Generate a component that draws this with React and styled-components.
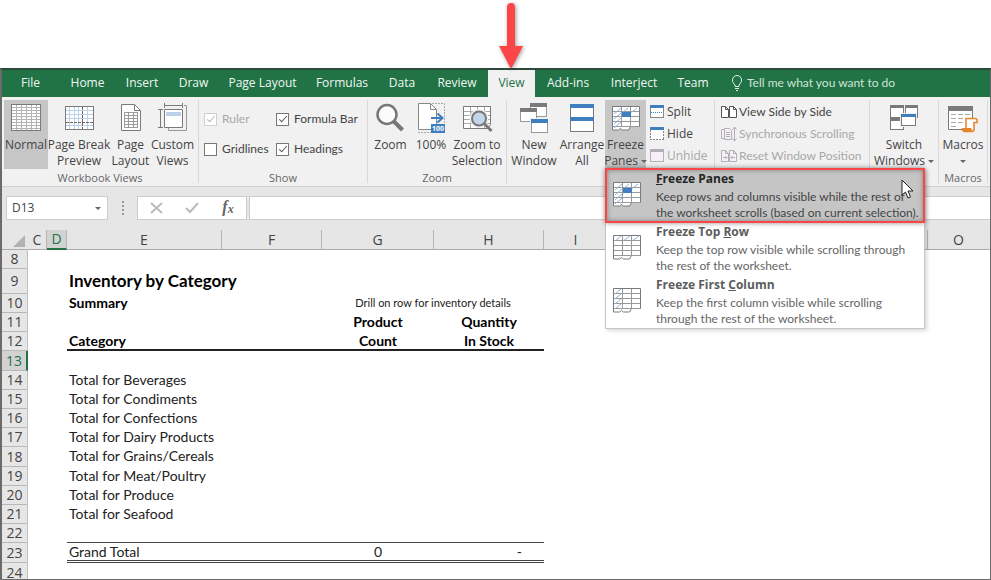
import React from "react";
import styled, { createGlobalStyle, css } from "styled-components";

const GlobalStyle = createGlobalStyle`
  *, *::before, *::after { box-sizing: border-box; }
  body { margin: 0; background: #fff; overflow: hidden; }
  button, input { font: inherit; color: inherit; }
`;

const Page = styled.div`
  display: flex;
  flex-direction: column;
  height: 100vh;
  padding-top: 68px;
  font-family: "Open Sans", "Noto Sans", sans-serif;
  font-size: 12px;
  line-height: 16px;
  color: #444;
`;

const compactText = css`
  font-family: Lato, "Open Sans", sans-serif;
  font-size: 12px;
`;

const AppWindow = styled.main`
  flex: 1;
  min-height: 0;
  display: flex;
  flex-direction: column;
  border: 1px solid #6b6b6b;
  border-left-width: 2px;
  border-top: 2px solid #2b4a3a;
`;

/* Tab strip */
const TabStrip = styled.nav`
  display: flex;
  flex: none;
  height: 27px;
  background: #217346;
`;

const Tab = styled.button`
  position: relative;
  flex: none;
  width: ${(p) => p.$width}px;
  padding: 0 0 2px;
  border: 0;
  background: ${(p) => (p.$active ? "#f1f1f1" : "transparent")};
  color: ${(p) => (p.$active ? "#217346" : "#f0f7f3")};
  white-space: nowrap;
`;

const TellMe = styled.button`
  ${compactText}
  display: flex;
  align-items: center;
  gap: 4px;
  padding: 0 12px 2px;
  border: 0;
  background: transparent;
  color: #cfe3d7;
  white-space: nowrap;
`;

const Pointer = styled.svg`
  position: absolute;
  left: 50%;
  bottom: 100%;
  width: 36px;
  height: 70px;
  transform: translateX(-50%);
  filter: drop-shadow(1px 1px 2px rgba(0, 0, 0, 0.4));
`;

/* Ribbon */
const Ribbon = styled.section`
  display: flex;
  flex: none;
  height: 90px;
  padding-top: 3px;
  background: #f1f1f1;
  border-bottom: 1px solid #d0d0d0;
`;

const Group = styled.div`
  display: flex;
  flex-direction: column;
  flex: none;
  width: ${(p) => p.$width}px;
  height: 83px;
  border-right: 1px solid #d8d8d8;
`;

const GroupBody = styled.div`
  display: flex;
  flex: none;
  height: 69px;
  padding-left: ${(p) => p.$inset || 2}px;
`;

const GroupLabel = styled.div`
  flex: none;
  height: 16px;
  margin-top: 1px;
  font-size: 11px;
  line-height: 16px;
  text-align: center;
  color: #666;
`;

const BigButtonBox = styled.div`
  position: relative;
  flex: none;
  width: ${(p) => p.$width}px;
`;

const BigButton = styled.button`
  display: flex;
  flex-direction: column;
  align-items: center;
  width: 100%;
  height: 69px;
  padding: 3px 0 0;
  border: 0;
  background: ${(p) => (p.$pressed ? "#c6c6c6" : "transparent")};
  color: #444;
  > svg { flex: none; width: 32px; height: 32px; margin-bottom: 2px; }
`;

const ButtonLine = styled.span`
  display: flex;
  align-items: center;
  gap: 3px;
  height: 16px;
  white-space: nowrap;
`;

const Caret = styled.span`
  width: 0;
  height: 0;
  border: 3px solid transparent;
  border-top-color: #666;
  border-bottom-width: 0;
`;

const CheckGrid = styled.div`
  display: grid;
  grid-template-columns: 72px auto;
  align-content: start;
  row-gap: 14px;
  padding-top: 11px;
`;

const CheckLabel = styled.label`
  ${compactText}
  display: flex;
  align-items: center;
  gap: 5px;
  height: 16px;
  white-space: nowrap;
  color: ${(p) => (p.$disabled ? "#a8a8a8" : "#444")};
`;

const CheckBox = styled.input.attrs({ type: "checkbox" })`
  appearance: none;
  flex: none;
  display: grid;
  place-items: center;
  width: 13px;
  height: 13px;
  margin: 0;
  border: 1px solid #777;
  background: #fff;
  &:disabled { border-color: #cfcfcf; }
  &:checked::after {
    content: "";
    width: 4px;
    height: 8px;
    margin-bottom: 2px;
    border: solid #555;
    border-width: 0 1px 1px 0;
    transform: rotate(42deg);
  }
  &:checked:disabled::after { border-color: #b5b5b5; }
`;

const SmallColumn = styled.div`
  display: flex;
  flex-direction: column;
  flex: none;
  gap: 6px;
  width: ${(p) => p.$width}px;
  height: 83px;
  padding: 4px 0 0 ${(p) => p.$inset}px;
  border-right: 1px solid #d8d8d8;
  ${(p) => p.$compact && compactText}
`;

const SmallButton = styled.button`
  display: flex;
  align-items: center;
  gap: 2px;
  height: 16px;
  padding: 0;
  border: 0;
  background: transparent;
  color: ${(p) => (p.disabled ? "#a8a8a8" : "#444")};
  white-space: nowrap;
  svg { flex: none; height: 16px; width: ${(p) => p.$icon}px; }
`;

/* Freeze menu */
const Menu = styled.div`
  position: absolute;
  z-index: 5;
  top: 68px;
  left: 0;
  width: 320px;
  background: #fff;
  border: 1px solid #c6c6c6;
  box-shadow: 2px 2px 4px rgba(0, 0, 0, 0.15);
`;

const MenuItem = styled.button`
  position: relative;
  display: grid;
  grid-template-columns: 50px 1fr;
  width: 100%;
  height: 53px;
  padding: 1px 0 0;
  border: 0;
  text-align: left;
  background: #fff;
  color: #666;
  > svg { margin: 12px 0 0 7px; }
  ${(p) => p.$active && css`
    z-index: 1;
    background: #c5c5c5;
    color: #444;
    &::before {
      content: "";
      position: absolute;
      inset: -1px;
      border: 2px solid #fb4546;
      box-shadow: 0 0 5px rgba(0, 0, 0, 0.45), inset 0 0 5px rgba(0, 0, 0, 0.35);
    }
  `}
`;

const MenuTitle = styled.strong`
  display: block;
  height: 19px;
  line-height: 18px;
  font-weight: 700;
  color: ${(p) => (p.$active ? "#262626" : "#5c5c5c")};
`;

const MenuText = styled.span`
  ${compactText}
  display: block;
  white-space: pre;
`;

const Cursor = styled.svg`
  position: absolute;
  right: 10px;
  top: 10px;
  && { margin: 0; }
`;

/* Formula bar */
const FormulaBar = styled.section`
  display: flex;
  flex: none;
  height: 43px;
  padding: 9px 0 10px 4px;
  background: #e6e6e6;
`;

const NameBox = styled.div`
  display: flex;
  align-items: center;
  width: 102px;
  border: 1px solid #cdcdcd;
  background: #fff;
  input { flex: 1; min-width: 0; padding: 0 0 0 5px; border: 0; outline: 0; background: none; }
  button { display: grid; place-items: center; width: 18px; height: 20px; padding: 0; border: 0; background: none; }
`;

const Dots = styled.div`
  display: grid;
  align-content: center;
  justify-content: center;
  gap: 2px;
  width: 29px;
  i { width: 2px; height: 2px; background: #999; }
`;

const EntryTools = styled.div`
  display: grid;
  grid-template-columns: repeat(3, 1fr);
  width: 110px;
  margin-right: 2px;
  border: 1px solid #cdcdcd;
  background: #fff;
  button { display: grid; place-items: center; padding: 0; border: 0; background: none; }
`;

const FxLabel = styled.span`
  font: italic 700 16px/20px "Liberation Serif", serif;
  color: #666;
  sub { font-size: 12px; vertical-align: -1px; }
`;

const FormulaInput = styled.input`
  flex: 1;
  min-width: 0;
  border: 1px solid #cdcdcd;
  border-right: 0;
  background: #fff;
  outline: 0;
`;

/* Worksheet */
const SheetArea = styled.div`
  flex: 1;
  min-height: 0;
  overflow: hidden;
`;

const Sheet = styled.table`
  width: 100%;
  table-layout: fixed;
  border-collapse: separate;
  border-spacing: 0;
  font-family: Lato, sans-serif;
  font-size: 14px;
  line-height: 16px;
  color: #222;
`;

const Col = styled.col`
  width: ${(p) => (p.$width ? `${p.$width}px` : "auto")};
`;

const ColHead = styled.th`
  height: 20px;
  padding: 0;
  font: 400 14px/18px "Open Sans", sans-serif;
  color: ${(p) => (p.$selected ? "#217346" : "#444")};
  background: ${(p) => (p.$selected ? "#d2d2d2" : "#e6e6e6")};
  border-right: 1px solid ${(p) => (p.$plain ? "#e6e6e6" : "#b4b4b4")};
  border-bottom: ${(p) => (p.$selected ? "2px solid #217346" : "1px solid #ababab")};
`;

const CornerMark = styled.svg`
  display: block;
  margin: 3px 2px 0 auto;
`;

const Row = styled.tr`
  height: ${(p) => p.$height}px;
`;

const RowHead = styled.th`
  padding: 0;
  font: 400 14px/16px "Open Sans", sans-serif;
  color: ${(p) => (p.$selected ? "#217346" : "#444")};
  background: ${(p) => (p.$selected ? "#d2d2d2" : "#e6e6e6")};
  border-right: ${(p) => (p.$selected ? "2px solid #217346" : "1px solid #c0c0c0")};
  border-bottom: 1px solid #b8b8b8;
`;

const Cell = styled.td`
  padding: 0 ${(p) => (p.$align === "right" ? 22 : 0)}px ${(p) => (p.$line ? 0 : 2)}px ${(p) => (p.$align ? 0 : 2)}px;
  white-space: nowrap;
  text-align: ${(p) => p.$align || "left"};
  font-weight: ${(p) => (p.$bold ? 700 : 400)};
  font-size: ${(p) => p.$size || 14}px;
  color: ${(p) => (p.$bold ? "#000" : "#222")};
  ${(p) => p.$line === "thick" && "border-bottom: 2px solid #222;"}
  ${(p) => p.$line === "thin" && "border-bottom: 1px solid #444;"}
  ${(p) => p.$line === "double" && "border-bottom: 3px double #444;"}
`;

const G = "#7a7a7a";
const B = "#3f7fbf";

const NormalIcon = () => (
  <svg viewBox="0 0 32 32" fill="none" shapeRendering="crispEdges">
    <path d="M1.5 1.5h29v26h-29z" fill="#fff" stroke={G} />
    <path d="M6.5 2v25M11.5 2v25M16.5 2v25M21.5 2v25M26.5 2v25M2 4.5h28M2 7.5h28M2 10.5h28M2 13.5h28M2 16.5h28M2 19.5h28M2 22.5h28M2 25.5h28" stroke="#b3b3b3" />
  </svg>
);
const BreakIcon = () => (
  <svg viewBox="0 0 32 32" fill="none" shapeRendering="crispEdges">
    <path d="M2.5 3.5h28v23h-28z" fill="#fff" stroke={G} />
    <path d="M6.5 4v22M11.5 4v22M15.5 4v22M24.5 4v22M3 7.5h27M3 11.5h27M3 15.5h27M3 22.5h27" stroke="#b9d2ea" />
    <path d="M19.5 4v22M3 19.5h27" stroke="#666" strokeDasharray="3 1" />
  </svg>
);
const PageIcon = () => (
  <svg viewBox="0 0 32 32" fill="none" stroke={G}>
    <path d="M6.5 1.5h13l6 6v20h-19z" fill="#fff" />
    <path d="M19.5 1.5v6h6" />
    <path d="M9.5 9.5h13v15h-13zM13.5 9.5v15M18.5 9.5v15M9.5 12.5h13M9.5 15.5h13M9.5 18.5h13M9.5 21.5h13" stroke="#999" />
  </svg>
);
const CustomIcon = () => (
  <svg viewBox="0 0 32 32" fill="none" stroke={G}>
    <path d="M7.5 6.5h18v18h-18z" fill="#fff" />
    <path d="M9 9h15v4H9z" fill="#bcd0e8" stroke="none" />
    <path d="M7 2.5h19M7.5 0v5M25.5 0v5M3.5 7v18M1 6.5h5M1 24.5h5" />
    <path d="M27 2.5h2.5v25h-18V25" stroke="#999" />
  </svg>
);
const ZoomIcon = () => (
  <svg viewBox="0 0 32 32" fill="none" stroke="#777">
    <circle cx="12" cy="11.5" r="9.5" strokeWidth="2.5" fill="#fbfbfb" />
    <path d="M19 18.5l8.5 8.5" strokeWidth="4" />
  </svg>
);
const HundredIcon = () => (
  <svg viewBox="0 0 32 32" fill="none">
    <path d="M17 .5h12.5V20M3 29.5h13" stroke="#aaa" strokeDasharray="2 1" />
    <path d="M3.5 .5h12l6 6v20h-18z" fill="#fff" stroke="#888" />
    <path d="M15.5 .5v6h6" stroke="#888" />
    <path d="M16 15h11M22.5 10.500l5 4.500-5 4.500" stroke={B} strokeWidth="2" />
    <path d="M16 21h14v9H16z" fill={B} />
    <text x="23" y="28" fontSize="7" fontWeight="700" textAnchor="middle" fill="#fff">100</text>
  </svg>
);
const ZoomSelIcon = () => (
  <svg viewBox="0 0 32 32" fill="none">
    <path d="M2.5 3.5h27v18l-3 4h-24z" fill="#fff" stroke={G} />
    <path d="M9 8h14v12H9z" fill="#bcd0e8" />
    <path d="M9.5 4v21M16.5 4v21M23.5 4v21M3 8.5h26M3 12.5h26M3 16.5h26M3 20.5h26" stroke="#aaa" />
    <circle cx="18" cy="15.5" r="7.5" fill="#c3d6ec" stroke="#f1f1f1" strokeWidth="4" />
    <circle cx="18" cy="15.5" r="7" fill="#c3d6ec" stroke="#777" strokeWidth="2" />
    <path d="M23.5 21l7 7" stroke="#777" strokeWidth="3" />
  </svg>
);
const NewWindowIcon = () => (
  <svg viewBox="0 0 32 32" fill="none" shapeRendering="crispEdges">
    <path d="M12.5 .5h16v13h-16z" fill="#fff" stroke="#999" /><path d="M12 0h17v4H12z" fill={G} />
    <path d="M2.5 5.5h16v13h-16z" fill="#fff" stroke="#999" /><path d="M2 5h17v4H2z" fill={G} />
    <path d="M12 15h18v15H12z" fill="#f1f1f1" />
    <path d="M13.5 16.5h16v13h-16z" fill="#fff" stroke="#999" /><path d="M13 16h17v4H13z" fill={B} />
  </svg>
);
const ArrangeIcon = () => (
  <svg viewBox="0 0 32 32" fill="none" shapeRendering="crispEdges">
    <path d="M4.5 1.5h23v27h-23z" fill="#fff" stroke={G} />
    <path d="M4 1h24v4H4zM4 14h24v4H4z" fill={B} />
  </svg>
);
const gridMarks = {
  panes: "M2 8l7-6M9 8l7-6M17 8l8-6M2 13l7-6M2 18l7-6M2 22l7-6",
  row: "M2 6l6-5M10 6l7-5M19 6l7-5",
  column: "M2 6l6-5M2 11l6-5M2 16l6-5M2 21l6-5",
};
const FreezeGrid = ({ kind }) => (
  <svg width="28" height="25" viewBox="0 0 28 25" fill="none">
    <path d="M.5 .5h27v20h-9l-2 3.500h-6l-2-1.500-2 1.500h-6z" fill="#fff" stroke={G} />
    <path d="M9.5 1v20M18.5 1v20M1 5.5h26M1 10.5h26M1 15.5h26M1 20.5h26" stroke="#999" />
    <path d={gridMarks[kind]} stroke="#8db4db" />
    {kind === "panes" && <path d="M10 6h9v5h-9z" fill={B} />}
  </svg>
);
const FreezeIcon = () => (
  <svg viewBox="0 0 32 32"><g transform="translate(2 3)"><FreezeGrid kind="panes" /></g></svg>
);
const SwitchIcon = () => (
  <svg viewBox="0 0 32 32" fill="none" shapeRendering="crispEdges">
    <path d="M2.5 3.5h13v11h-13zM17.5 3.5h12v11h-12zM2.5 16.5h13v10h-13z" fill="#fff" stroke={G} />
    <path d="M2 2h14v3H2zM17 2h13v3H17zM2 15h14v3H2z" fill={G} />
    <path d="M12 10h17v14H12z" fill="#f1f1f1" />
    <path d="M13.5 11.5h14v11h-14z" fill="#fff" stroke={G} /><path d="M13 11h15v3H13z" fill={B} />
  </svg>
);
const MacrosIcon = () => (
  <svg viewBox="0 0 32 32" fill="none">
    <path d="M1.5 3.5h24v23h-24z" fill="#fff" stroke={G} />
    <path d="M1 3h25v5H1z" fill={G} />
    <path d="M4 11.5h5M11 11.5h5M18 11.5h5M4 15.5h5M11 15.5h5M4 19.5h5M11 19.5h5M4 23.5h5" stroke="#aaa" />
    <path d="M19 15.5h9q2 0 2 2v2h-3v7q0 2-2 2h-8q2-1 2-3z" fill="#fff" stroke="#e8832a" strokeWidth="1.5" />
    <path d="M15 25.5h9q0 3 2 3h-9q-2 0-2-3z" fill="#e8832a" stroke="#e8832a" />
  </svg>
);
const PaneIcon = ({ kind }) => (
  <svg viewBox="0 0 15 16" fill="none" shapeRendering="crispEdges">
    <path d="M.5 2.5h13v11H.5z" fill={kind === "unhide" ? "#f5f0f7" : "#fff"} stroke={kind === "unhide" ? "#b5adb8" : "#888"} strokeDasharray={kind === "hide" ? "2 1" : undefined} />
    <path d="M0 1h14v3H0z" fill={kind === "unhide" ? "#b5adb8" : B} />
    {kind === "split" && <path d="M1 8.5h12" stroke={B} strokeDasharray="1 1" />}
  </svg>
);
const PairIcon = ({ kind }) => {
  const c = kind === "side" ? "#555" : "#b5adb8";
  return (
    <svg viewBox="0 0 16 16" fill="none" stroke={c}>
      {kind === "sync" ? (
        <>
          <path d="M3 3.5H.5v9H3M3.5 2.5h5l2 2v9h-7zM5 6.5h4M5 8.5h4M5 10.5h4" />
          <path d="M13.5 1v14M11.5 3.5l2-2.5 2 2.5M11.5 12.5l2 2.5 2-2.5" />
        </>
      ) : (
        <path d="M.5 2.5h4l3 3v8h-7zM4.5 2.5v3h3M8.5 2.5h4l3 3v8h-7zM12.5 2.5v3h3" fill={kind === "side" ? "#fff" : "#f5f0f7"} />
      )}
      {kind === "reset" && <path d="M2 9.5h4M4.5 8L6 9.5 4.5 11M14 9.5h-4M11.5 8L10 9.5l1.500 1.500" />}
    </svg>
  );
};
const BulbIcon = () => (
  <svg width="12" height="16" viewBox="0 0 12 16" fill="none" stroke="#e3efe8">
    <path d="M4 11.5V10C2.5 8.5 1.5 7 1.5 5a4.5 4.5 0 0 1 9 0c0 2-1 3.500-2.500 5v1.500zM4 13.5h4M5 15.5h2" />
  </svg>
);

const tabs = [
  ["File", 57], ["Home", 57], ["Insert", 52], ["Draw", 51], ["Page Layout", 87], ["Formulas", 72],
  ["Data", 48], ["Review", 62], ["View", 47], ["Add-ins", 66], ["Interject", 66], ["Team", 52],
];

const menuItems = [
  { kind: "panes", title: ["", "F", "reeze Panes"], text: "Keep rows and columns visible while the rest of\nthe worksheet scrolls (based on current selection)." },
  { kind: "row", title: ["Freeze Top ", "R", "ow"], text: "Keep the top row visible while scrolling through\nthe rest of the worksheet." },
  { kind: "column", title: ["Freeze First ", "C", "olumn"], text: "Keep the first column visible while scrolling\nthrough the rest of the worksheet." },
];

const rows = [
  { n: 8, h: 19 },
  { n: 9, h: 25, e: "Inventory by Category", bold: true, size: 17 },
  { n: 10, h: 19, e: "Summary", bold: true, note: "Drill on row for inventory details" },
  { n: 11, h: 19, g: "Product", q: "Quantity", bold: true },
  { n: 12, h: 19, e: "Category", g: "Count", q: "In Stock", bold: true, line: "thick" },
  { n: 13, h: 20, selected: true },
  { n: 14, h: 19, e: "Total for Beverages" },
  { n: 15, h: 19, e: "Total for Condiments" },
  { n: 16, h: 19, e: "Total for Confections" },
  { n: 17, h: 19, e: "Total for Dairy Products" },
  { n: 18, h: 20, e: "Total for Grains/Cereals" },
  { n: 19, h: 19, e: "Total for Meat/Poultry" },
  { n: 20, h: 19, e: "Total for Produce" },
  { n: 21, h: 19, e: "Total for Seafood" },
  { n: 22, h: 19, line: "thin" },
  { n: 23, h: 20, e: "Grand Total", g: "0", q: "-", qAlign: "right", line: "double" },
  { n: 24, h: 20 },
];

const Big = ({ icon, lines, width, pressed, caret, children }) => (
  <BigButtonBox $width={width}>
    <BigButton $pressed={pressed}>
      {icon}
      {lines.map((line, i) => (
        <ButtonLine key={i}>
          {line}
          {caret && i === lines.length - 1 && <Caret />}
        </ButtonLine>
      ))}
    </BigButton>
    {children}
  </BigButtonBox>
);

const Check = ({ label, ...rest }) => (
  <CheckLabel $disabled={rest.disabled}>
    <CheckBox {...rest} />
    {label}
  </CheckLabel>
);

const FreezeMenu = () => (
  <Menu role="menu">
    {menuItems.map(({ kind, title, text }) => {
      const active = kind === "panes";
      return (
        <MenuItem key={kind} role="menuitem" $active={active}>
          <FreezeGrid kind={kind} />
          <span>
            <MenuTitle $active={active}>{title[0]}<u>{title[1]}</u>{title[2]}</MenuTitle>
            <MenuText>{text}</MenuText>
          </span>
          {active && (
            <Cursor width="13" height="20" viewBox="0 0 13 20">
              <path d="M1 1v15l3.500-3 2.500 6 2.500-1-2.500-6h5z" fill="#fff" stroke="#222" />
            </Cursor>
          )}
        </MenuItem>
      );
    })}
  </Menu>
);

export default function App() {
  return (
    <Page>
      <GlobalStyle />
      <AppWindow>
        <TabStrip>
          {tabs.map(([name, width]) => (
            <Tab key={name} $width={width} $active={name === "View"}>
              {name}
              {name === "View" && (
                <Pointer viewBox="0 0 36 70">
                  <path d="M13 7a4 4 0 0 1 8 0v39h8L17 69 5 46h8z" fill="#fb4546" />
                </Pointer>
              )}
            </Tab>
          ))}
          <TellMe><BulbIcon />Tell me what you want to do</TellMe>
        </TabStrip>

        <Ribbon>
          <Group $width={197}>
            <GroupBody>
              <Big width={44} pressed icon={<NormalIcon />} lines={["Normal"]} />
              <Big width={62} icon={<BreakIcon />} lines={["Page Break", "Preview"]} />
              <Big width={41} icon={<PageIcon />} lines={["Page", "Layout"]} />
              <Big width={43} icon={<CustomIcon />} lines={["Custom", "Views"]} />
            </GroupBody>
            <GroupLabel>Workbook Views</GroupLabel>
          </Group>
          <Group $width={169}>
            <GroupBody $inset={5}>
              <CheckGrid>
                <Check label="Ruler" defaultChecked disabled />
                <Check label="Formula Bar" defaultChecked />
                <Check label="Gridlines" />
                <Check label="Headings" defaultChecked />
              </CheckGrid>
            </GroupBody>
            <GroupLabel>Show</GroupLabel>
          </Group>
          <Group $width={139}>
            <GroupBody>
              <Big width={41} icon={<ZoomIcon />} lines={["Zoom"]} />
              <Big width={40} icon={<HundredIcon />} lines={["100%"]} />
              <Big width={52} icon={<ZoomSelIcon />} lines={["Zoom to", "Selection"]} />
            </GroupBody>
            <GroupLabel>Zoom</GroupLabel>
          </Group>
          <Group $width={432}>
            <GroupBody>
              <Big width={50} icon={<NewWindowIcon />} lines={["New", "Window"]} />
              <Big width={46} icon={<ArrangeIcon />} lines={["Arrange", "All"]} />
              <Big width={41} pressed caret icon={<FreezeIcon />} lines={["Freeze", "Panes"]}>
                <FreezeMenu />
              </Big>
              <SmallColumn $width={69} $inset={4}>
                <SmallButton $icon={15}><PaneIcon kind="split" />Split</SmallButton>
                <SmallButton $icon={15}><PaneIcon kind="hide" />Hide</SmallButton>
                <SmallButton $icon={15} disabled><PaneIcon kind="unhide" />Unhide</SmallButton>
              </SmallColumn>
              <SmallColumn $width={155} $inset={6} $compact>
                <SmallButton $icon={16}><PairIcon kind="side" />View Side by Side</SmallButton>
                <SmallButton $icon={16} disabled><PairIcon kind="sync" />Synchronous Scrolling</SmallButton>
                <SmallButton $icon={16} disabled><PairIcon kind="reset" />Reset Window Position</SmallButton>
              </SmallColumn>
              <Big width={68} caret icon={<SwitchIcon />} lines={["Switch", "Windows"]} />
            </GroupBody>
          </Group>
          <Group $width={49}>
            <GroupBody>
              <Big width={44} caret icon={<MacrosIcon />} lines={["Macros", ""]} />
            </GroupBody>
            <GroupLabel>Macros</GroupLabel>
          </Group>
        </Ribbon>

        <FormulaBar>
          <NameBox>
            <input aria-label="Name box" defaultValue="D13" />
            <button aria-label="Cell names"><Caret /></button>
          </NameBox>
          <Dots><i /><i /><i /><i /></Dots>
          <EntryTools>
            <button aria-label="Cancel">
              <svg width="13" height="12" viewBox="0 0 13 12" stroke="#bbb" strokeWidth="2"><path d="M1 1l11 10M12 1L1 11" /></svg>
            </button>
            <button aria-label="Enter">
              <svg width="14" height="12" viewBox="0 0 14 12" fill="none" stroke="#bbb" strokeWidth="2"><path d="M1 6l4 4 8-9" /></svg>
            </button>
            <button aria-label="Insert function"><FxLabel>f<sub>x</sub></FxLabel></button>
          </EntryTools>
          <FormulaInput aria-label="Formula" />
        </FormulaBar>

        <SheetArea>
          <Sheet>
            <colgroup>
              {[26, 19, 20, 155, 100, 112, 110, 64, 0, 62].map((w, i) => <Col key={i} $width={w} />)}
            </colgroup>
            <thead>
              <tr>
                <ColHead $plain>
                  <CornerMark width="12" height="12" viewBox="0 0 12 12"><path d="M12 0v12H0z" fill="#b2b2b2" /></CornerMark>
                </ColHead>
                <ColHead>C</ColHead>
                <ColHead $selected>D</ColHead>
                <ColHead>E</ColHead>
                <ColHead>F</ColHead>
                <ColHead>G</ColHead>
                <ColHead>H</ColHead>
                <ColHead>I</ColHead>
                <ColHead />
                <ColHead $plain>O</ColHead>
              </tr>
            </thead>
            <tbody>
              {rows.map((r) => (
                <Row key={r.n} $height={r.h}>
                  <RowHead $selected={r.selected}>{r.n}</RowHead>
                  <Cell />
                  <Cell />
                  <Cell $bold={r.bold} $size={r.size} $line={r.line}>{r.e}</Cell>
                  <Cell $line={r.line} />
                  {r.note ? (
                    <Cell colSpan={2} $align="center" $size={11}>{r.note}</Cell>
                  ) : (
                    <>
                      <Cell $align="center" $bold={r.bold} $line={r.line}>{r.g}</Cell>
                      <Cell $align={r.qAlign || "center"} $bold={r.bold} $line={r.line}>{r.q}</Cell>
                    </>
                  )}
                  <Cell colSpan={3} />
                </Row>
              ))}
            </tbody>
          </Sheet>
        </SheetArea>
      </AppWindow>
    </Page>
  );
}
